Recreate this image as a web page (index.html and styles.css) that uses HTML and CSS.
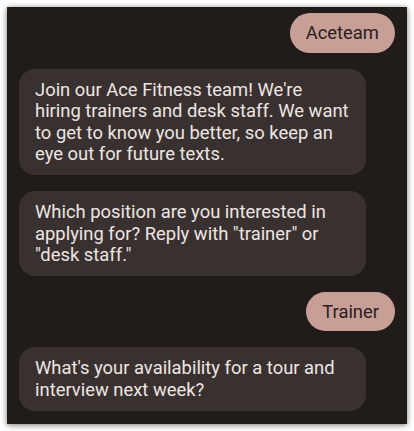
FILE: index.html
```html
<!DOCTYPE html>
<html lang="en">
  <head>
    <meta charset="UTF-8" />
    <meta name="viewport" content="width=device-width, initial-scale=1.0" />
    <title>Ace Fitness chat</title>
    <link rel="stylesheet" href="styles.css">
  </head>
  <body>
    <div class="phone">
      <div class="thread">
        <div class="msg msg-out">Aceteam</div>
        <div class="msg msg-in">
          Join our Ace Fitness team! We're hiring trainers and desk staff. We want
          to get to know you better, so keep an eye out for future texts.
        </div>
        <div class="msg msg-in">
          Which position are you interested in applying for? Reply with "trainer" or
          "desk staff."
        </div>
        <div class="msg msg-out">Trainer</div>
        <div class="msg msg-in">
          What's your availability for a tour and interview next week?
        </div>
        <!-- next reply, scrolled out of view -->
        <div class="msg-next"></div>
      </div>
    </div>
  </body>
</html>
```

FILE: styles.css
```css
body {
  margin: 0;
  padding: 7px;
  background-color: #fff;
  font-family: Roboto, "Liberation Sans", sans-serif;
}

.phone {
  width: 400px;
  height: 417px;
  background-color: #211c1a;
  box-shadow: 0 1px 6px rgba(0, 0, 0, 0.55);
  overflow: hidden;
}

.thread {
  display: flex;
  flex-direction: column;
  gap: 16px;
  padding: 6px 12px;
}

.msg {
  font-size: 18.4px;
  line-height: 21.6px;
}

.msg-out {
  align-self: flex-end;
  padding: 9px 16px;
  border-radius: 20px;
  background-color: #c89f97;
  color: #2a201e;
}

.msg-in {
  align-self: flex-start;
  max-width: 347px;
  box-sizing: border-box;
  padding: 10px 16px;
  border-radius: 16px;
  background-color: #393130;
  color: #eee5e2;
}

.msg-next {
  align-self: flex-end;
  width: 265px;
  height: 40px;
  margin-right: 12px;
  border-radius: 16px;
  background-color: #393130;
}
```
